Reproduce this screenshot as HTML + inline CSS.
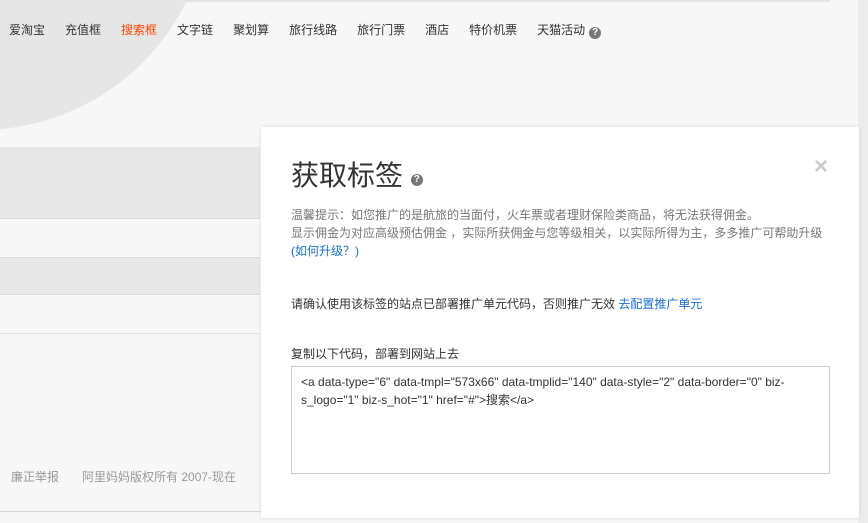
<!DOCTYPE html>
<html><head><meta charset="utf-8"><style>
*{margin:0;padding:0;box-sizing:border-box}
body{width:868px;height:523px;overflow:hidden;background:#f7f7f7;font-family:"Liberation Sans","Noto Sans CJK SC",sans-serif;position:relative;font-size:12px;color:#333}
.abs{position:absolute}
.circle{left:-250px;top:-330px;width:460px;height:460px;border-radius:50%;background:#e6e6e6}
.nav{left:9px;top:21px;font-size:12px;color:#333;white-space:nowrap}
.nav span{margin-right:20px}
.q{display:inline-block;width:12px;height:12px;border-radius:50%;background:#777;color:#fff;font-size:10px;line-height:12px;text-align:center;font-weight:bold;vertical-align:-1px}
.band{left:0;width:260px}
.modal{left:261px;top:127px;width:598px;height:391px;background:#fff;box-shadow:0 0 4px rgba(0,0,0,.12)}
.t{position:absolute;white-space:nowrap}
a{color:#1a6fd6;text-decoration:none}
</style></head><body>
<div class="abs" style="left:0;top:0;width:830px;height:2px;background:#e4e4e4"></div>
<div class="abs circle"></div>
<div class="abs" style="left:858px;top:0;width:10px;height:523px;background:#ececec"></div>
<div class="abs nav"><span>爱淘宝</span><span>充值框</span><span style="color:#f40">搜索框</span><span>文字链</span><span>聚划算</span><span>旅行线路</span><span>旅行门票</span><span>酒店</span><span>特价机票</span><span style="margin-right:4px">天猫活动</span><span class="q">?</span></div>
<div class="abs band" style="top:147px;height:72px;background:#e8e8e8;border-bottom:1px solid #dcdcdc"></div>
<div class="abs band" style="top:257px;height:38px;background:#e8e8e8;border-top:1px solid #dcdcdc;border-bottom:1px solid #dcdcdc"></div>
<div class="abs band" style="top:333px;height:1px;background:#e2e2e2"></div>
<div class="abs" style="left:11px;top:468px;color:#999;font-size:12px;white-space:nowrap">廉正举报<span style="margin-left:23px">阿里妈妈版权所有 2007-现在</span></div>
<div class="abs" style="left:0;top:511px;width:860px;height:1px;background:#d8d8d8"></div>
<div class="abs modal">
<div class="t" style="left:30px;top:31px;font-size:28px;color:#333;line-height:36px">获取标签 <span class="q" style="vertical-align:3px">?</span></div>
<div class="t" style="left:553px;top:26px;font-size:24px;color:#ccc;font-weight:bold">×</div>
<div class="t" style="left:30px;top:79px;color:#777;line-height:18px">温馨提示：如您推广的是航旅的当面付，火车票或者理财保险类商品，将无法获得佣金。<br>显示佣金为对应高级预估佣金 ，实际所获佣金与您等级相关，以实际所得为主，多多推广可帮助升级<br><a>(如何升级？)</a></div>
<div class="t" style="left:30px;top:168px;color:#333">请确认使用该标签的站点已部署推广单元代码，否则推广无效 <a>去配置推广单元</a></div>
<div class="t" style="left:30px;top:218px;color:#333">复制以下代码，部署到网站上去</div>
<div class="abs" style="left:30px;top:239px;width:539px;height:108px;border:1px solid #ccc;padding:6px 9px;line-height:18px;color:#333;white-space:normal">&lt;a data-type="6" data-tmpl="573x66" data-tmplid="140" data-style="2" data-border="0" biz-s_logo="1" biz-s_hot="1" href="#"&gt;搜索&lt;/a&gt;</div>
</div>
</body></html>
